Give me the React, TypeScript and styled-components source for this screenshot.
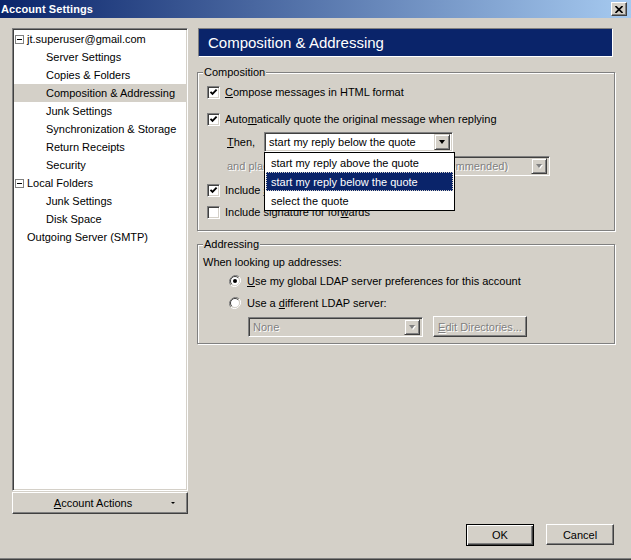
import React from "react";
import styled, { createGlobalStyle, css } from "styled-components";

const GlobalStyle = createGlobalStyle`
  html, body {
    margin: 0;
    padding: 0;
    background: #d4d0c8;
  }
  body {
    font-family: "Liberation Sans", Arial, sans-serif;
    font-size: 11px;
    color: #000;
  }
`;

const sunken = css`
  border: 1px solid;
  border-color: #808080 #fff #fff #808080;
  box-shadow: inset 1px 1px #404040, inset -1px -1px #d4d0c8;
`;

const raised = css`
  border: 1px solid;
  border-color: #fff #404040 #404040 #fff;
  box-shadow: inset -1px -1px #808080;
`;

const Window = styled.div`
  width: 631px;
  height: 560px;
  display: flex;
  flex-direction: column;
  background: #d4d0c8;
  box-shadow: inset 0 -1px #404040, inset 0 -2px #808080;
  overflow: hidden;
`;

const TitleBar = styled.div`
  height: 18px;
  flex: none;
  display: flex;
  align-items: center;
  justify-content: space-between;
  padding: 0 4px 0 1px;
  background: linear-gradient(to right, #0a246a, #a6caf0);
`;

const Title = styled.span`
  color: #fff;
  font-weight: bold;
  font-size: 11px;
  letter-spacing: 0.1px;
`;

const CloseButton = styled.div`
  width: 16px;
  height: 14px;
  box-sizing: border-box;
  background: #d4d0c8;
  ${raised};
  display: flex;
  align-items: center;
  justify-content: center;
`;

const Body = styled.div`
  flex: 1;
  display: flex;
  gap: 9px;
  padding: 10px 16px 1px 12px;
  min-height: 0;
`;

const Sidebar = styled.div`
  width: 176px;
  display: flex;
  flex-direction: column;
`;

const Tree = styled.div`
  flex: 1;
  background: #fff;
  box-sizing: border-box;
  ${sunken};
  padding: 1px;
`;

const TreeRow = styled.div<{ $indent: number; $selected?: boolean }>`
  height: 18px;
  display: flex;
  align-items: center;
  gap: 3px;
  padding-left: ${(p) => p.$indent}px;
  background: ${(p) => (p.$selected ? "#d4d0c8" : "transparent")};
  white-space: nowrap;
`;

const Expander = styled.span`
  width: 9px;
  height: 9px;
  box-sizing: border-box;
  border: 1px solid #808080;
  background: #fff;
  display: flex;
  align-items: center;
  justify-content: center;
  &::after {
    content: "";
    width: 5px;
    height: 1px;
    background: #000;
  }
`;

const ActionsButton = styled.div`
  height: 22px;
  margin-top: 1px;
  box-sizing: border-box;
  ${raised};
  display: flex;
  align-items: center;
  justify-content: center;
  position: relative;
  padding-right: 14px;
`;

const SmallArrow = styled.span`
  position: absolute;
  right: 12px;
  top: 9px;
  width: 0;
  height: 0;
  border-left: 2px solid transparent;
  border-right: 2px solid transparent;
  border-top: 2px solid #000;
`;

const Main = styled.div`
  flex: 1;
  display: flex;
  flex-direction: column;
`;

const Header = styled.div`
  height: 29px;
  margin: 0 2px 0 1px;
  box-sizing: border-box;
  background: #0a246a;
  border: 1px solid;
  border-color: #808080 #fff #fff #808080;
  color: #fff;
  font-size: 15px;
  display: flex;
  align-items: center;
  padding-left: 9px;
`;

const Group = styled.fieldset<{ $top: number }>`
  margin: ${(p) => p.$top}px 0 0 0;
  padding: 0;
  border: 1px solid #808080;
  box-shadow: inset 1px 1px #fff, 1px 1px #fff;
  min-width: 0;
`;

const Legend = styled.legend`
  margin-left: 5px;
  padding: 0 1px;
  background: #d4d0c8;
  line-height: 13px;
`;

const GroupBody = styled.div<{ $pad: string }>`
  padding: ${(p) => p.$pad};
  display: flex;
  flex-direction: column;
`;

const Row = styled.div<{ $top?: number; $indent?: number; $h?: number; $width?: number }>`
  display: flex;
  align-items: center;
  height: ${(p) => p.$h ?? 18}px;
  margin-top: ${(p) => p.$top ?? 0}px;
  padding-left: ${(p) => p.$indent ?? 0}px;
  ${(p) => (p.$width ? `width: ${p.$width}px;` : "")}
  white-space: nowrap;
  position: relative;
`;

const ThenRow = styled(Row)`
  z-index: 2;
`;

const CheckBox = styled.span`
  width: 13px;
  height: 13px;
  box-sizing: border-box;
  flex: none;
  background: #fff;
  ${sunken};
  margin-right: 5px;
  display: flex;
  align-items: center;
  justify-content: center;
`;

const Label = styled.span<{ $width?: number; $disabled?: boolean }>`
  ${(p) => (p.$width ? `width: ${p.$width}px; flex: none;` : "")}
  color: ${(p) => (p.$disabled ? "#808080" : "#000")};
  ${(p) => (p.$disabled ? "text-shadow: 1px 1px #fff;" : "")}
`;

const Combo = styled.div<{ $width: number; $disabled?: boolean }>`
  height: 20px;
  width: ${(p) => p.$width}px;
  flex: none;
  box-sizing: border-box;
  background: ${(p) => (p.$disabled ? "#d4d0c8" : "#fff")};
  ${sunken};
  display: flex;
  align-items: center;
  padding: 0 2px 0 4px;
  color: ${(p) => (p.$disabled ? "#808080" : "#000")};
  ${(p) => (p.$disabled ? "text-shadow: 1px 1px #fff;" : "")}
`;

const SignatureCombo = styled(Combo)`
  margin-left: auto;
`;

const ComboText = styled.span`
  flex: 1;
  overflow: hidden;
`;

const ArrowButton = styled.span<{ $disabled?: boolean }>`
  width: 16px;
  height: 16px;
  box-sizing: border-box;
  flex: none;
  background: #d4d0c8;
  border: 1px solid;
  border-color: #d4d0c8 #404040 #404040 #d4d0c8;
  box-shadow: inset 1px 1px #fff, inset -1px -1px #808080;
  display: flex;
  align-items: center;
  justify-content: center;
  text-shadow: none;
  &::after {
    content: "";
    width: 0;
    height: 0;
    border-left: 3.5px solid transparent;
    border-right: 3.5px solid transparent;
    border-top: 4px solid ${(p) => (p.$disabled ? "#808080" : "#000")};
    ${(p) => (p.$disabled ? "filter: drop-shadow(1px 1px 0 #fff);" : "")}
  }
`;

const Popup = styled.div`
  position: absolute;
  left: 57px;
  top: 20px;
  width: 191px;
  box-sizing: border-box;
  border: 1px solid #000;
  background: #fff;
  padding: 0 1px;
`;

const PopupItem = styled.div<{ $selected?: boolean }>`
  height: 19px;
  box-sizing: border-box;
  display: flex;
  align-items: center;
  padding-left: 4px;
  background: ${(p) => (p.$selected ? "#0a246a" : "#fff")};
  color: ${(p) => (p.$selected ? "#fff" : "#000")};
  border: 1px dotted ${(p) => (p.$selected ? "#d4d0c8" : "transparent")};
`;

const Radio = styled.span`
  width: 12px;
  height: 12px;
  flex: none;
  margin-right: 6px;
  display: flex;
`;

const PushButton = styled.div<{ $width: number; $disabled?: boolean; $default?: boolean; $left?: number }>`
  width: ${(p) => p.$width}px;
  height: ${(p) => (p.$default ? 22 : 21)}px;
  margin-left: ${(p) => p.$left ?? 0}px;
  box-sizing: border-box;
  flex: none;
  display: flex;
  align-items: center;
  justify-content: center;
  color: ${(p) => (p.$disabled ? "#808080" : "#000")};
  ${(p) => (p.$disabled ? "text-shadow: 1px 1px #fff;" : "")}
  ${(p) =>
    p.$default
      ? css`
          border: 1px solid #000;
          box-shadow: inset 1px 1px #fff, inset -1px -1px #404040,
            inset -2px -2px #808080;
        `
      : raised}
`;

const Footer = styled.div`
  height: 45px;
  flex: none;
  display: flex;
  justify-content: flex-end;
  gap: 12px;
  padding: 9px 17px 0 0;
  box-sizing: border-box;
`;

const U = styled.u`
  text-decoration-thickness: 1px;
  text-underline-offset: 1px;
`;

const Check = () => (
  <svg width="9" height="9" viewBox="0 0 9 9">
    <path d="M1.5 3.8 L3.5 5.8 L7.6 1.7" stroke="#000" strokeWidth="1.9" fill="none" />
  </svg>
);

const RadioIcon = ({ on }: { on?: boolean }) => (
  <svg width="12" height="12" viewBox="0 0 12 12">
    <path d="M10.2 1.8 A6 6 0 0 0 1.8 10.2" stroke="#808080" strokeWidth="1" fill="none" />
    <path d="M1.8 10.2 A6 6 0 0 0 10.2 1.8" stroke="#fff" strokeWidth="1" fill="none" />
    <circle cx="6" cy="6" r="4.5" fill="#fff" />
    <path d="M9.2 2.8 A4.5 4.5 0 0 0 2.8 9.2" stroke="#404040" strokeWidth="1" fill="none" />
    <path d="M2.8 9.2 A4.5 4.5 0 0 0 9.2 2.8" stroke="#d4d0c8" strokeWidth="1" fill="none" />
    {on && <circle cx="6" cy="6" r="2" fill="#000" />}
  </svg>
);

const tree = [
  { label: "jt.superuser@gmail.com", indent: 1, expander: true },
  { label: "Server Settings", indent: 32 },
  { label: "Copies & Folders", indent: 32 },
  { label: "Composition & Addressing", indent: 32, selected: true },
  { label: "Junk Settings", indent: 32 },
  { label: "Synchronization & Storage", indent: 32 },
  { label: "Return Receipts", indent: 32 },
  { label: "Security", indent: 32 },
  { label: "Local Folders", indent: 1, expander: true },
  { label: "Junk Settings", indent: 32 },
  { label: "Disk Space", indent: 32 },
  { label: "Outgoing Server (SMTP)", indent: 13 },
];

export default function App() {
  return (
    <>
      <GlobalStyle />
      <Window>
        <TitleBar>
          <Title>Account Settings</Title>
          <CloseButton>
            <svg width="8" height="7" viewBox="0 0 8 7">
              <path d="M0.5 0 L7.5 7 M7.5 0 L0.5 7" stroke="#000" strokeWidth="1.6" />
            </svg>
          </CloseButton>
        </TitleBar>
        <Body>
          <Sidebar>
            <Tree>
              {tree.map((t, i) => (
                <TreeRow key={i} $indent={t.indent} $selected={t.selected}>
                  {t.expander && <Expander />}
                  <span>{t.label}</span>
                </TreeRow>
              ))}
            </Tree>
            <ActionsButton>
              <span>
                <U>A</U>ccount Actions
              </span>
              <SmallArrow />
            </ActionsButton>
          </Sidebar>
          <Main>
            <Header>Composition &amp; Addressing</Header>
            <Group $top={9}>
              <Legend>Composition</Legend>
              <GroupBody $pad="4px 0 9px 9px">
                <Row>
                  <CheckBox>
                    <Check />
                  </CheckBox>
                  <span>
                    <U>C</U>ompose messages in HTML format
                  </span>
                </Row>
                <Row $top={9}>
                  <CheckBox>
                    <Check />
                  </CheckBox>
                  <span>
                    Auto<U>m</U>atically quote the original message when replying
                  </span>
                </Row>
                <ThenRow $top={4} $indent={20} $h={20}>
                  <Label $width={37}>
                    <U>T</U>hen,
                  </Label>
                  <Combo $width={189}>
                    <ComboText>start my reply below the quote</ComboText>
                    <ArrowButton />
                  </Combo>
                  <Popup>
                    <PopupItem>start my reply above the quote</PopupItem>
                    <PopupItem $selected>start my reply below the quote</PopupItem>
                    <PopupItem>select the quote</PopupItem>
                  </Popup>
                </ThenRow>
                <Row $top={4} $indent={20} $h={20} $width={323}>
                  <Label $disabled>and place my signature</Label>
                  <SignatureCombo $width={201} $disabled>
                    <ComboText>below my reply (recommended)</ComboText>
                    <ArrowButton $disabled />
                  </SignatureCombo>
                </Row>
                <Row $top={5}>
                  <CheckBox>
                    <Check />
                  </CheckBox>
                  <span>
                    Include <U>s</U>ignature for replies
                  </span>
                </Row>
                <Row $top={4}>
                  <CheckBox />
                  <span>
                    Include signature for for<U>w</U>ards
                  </span>
                </Row>
              </GroupBody>
            </Group>
            <Group $top={7}>
              <Legend>Addressing</Legend>
              <GroupBody $pad="4px 0 6px 5px">
                <Row $h={14}>When looking up addresses:</Row>
                <Row $top={3} $indent={26}>
                  <Radio>
                    <RadioIcon on />
                  </Radio>
                  <span>
                    <U>U</U>se my global LDAP server preferences for this account
                  </span>
                </Row>
                <Row $top={4} $indent={26}>
                  <Radio>
                    <RadioIcon />
                  </Radio>
                  <span>
                    Use a <U>d</U>ifferent LDAP server:
                  </span>
                </Row>
                <Row $top={4} $indent={45} $h={21}>
                  <Combo $width={175} $disabled>
                    <ComboText>None</ComboText>
                    <ArrowButton $disabled />
                  </Combo>
                  <PushButton $width={94} $disabled $left={10}>
                    <span>
                      <U>E</U>dit Directories...
                    </span>
                  </PushButton>
                </Row>
              </GroupBody>
            </Group>
          </Main>
        </Body>
        <Footer>
          <PushButton $width={68} $default>
            OK
          </PushButton>
          <PushButton $width={68}>Cancel</PushButton>
        </Footer>
      </Window>
    </>
  );
}
